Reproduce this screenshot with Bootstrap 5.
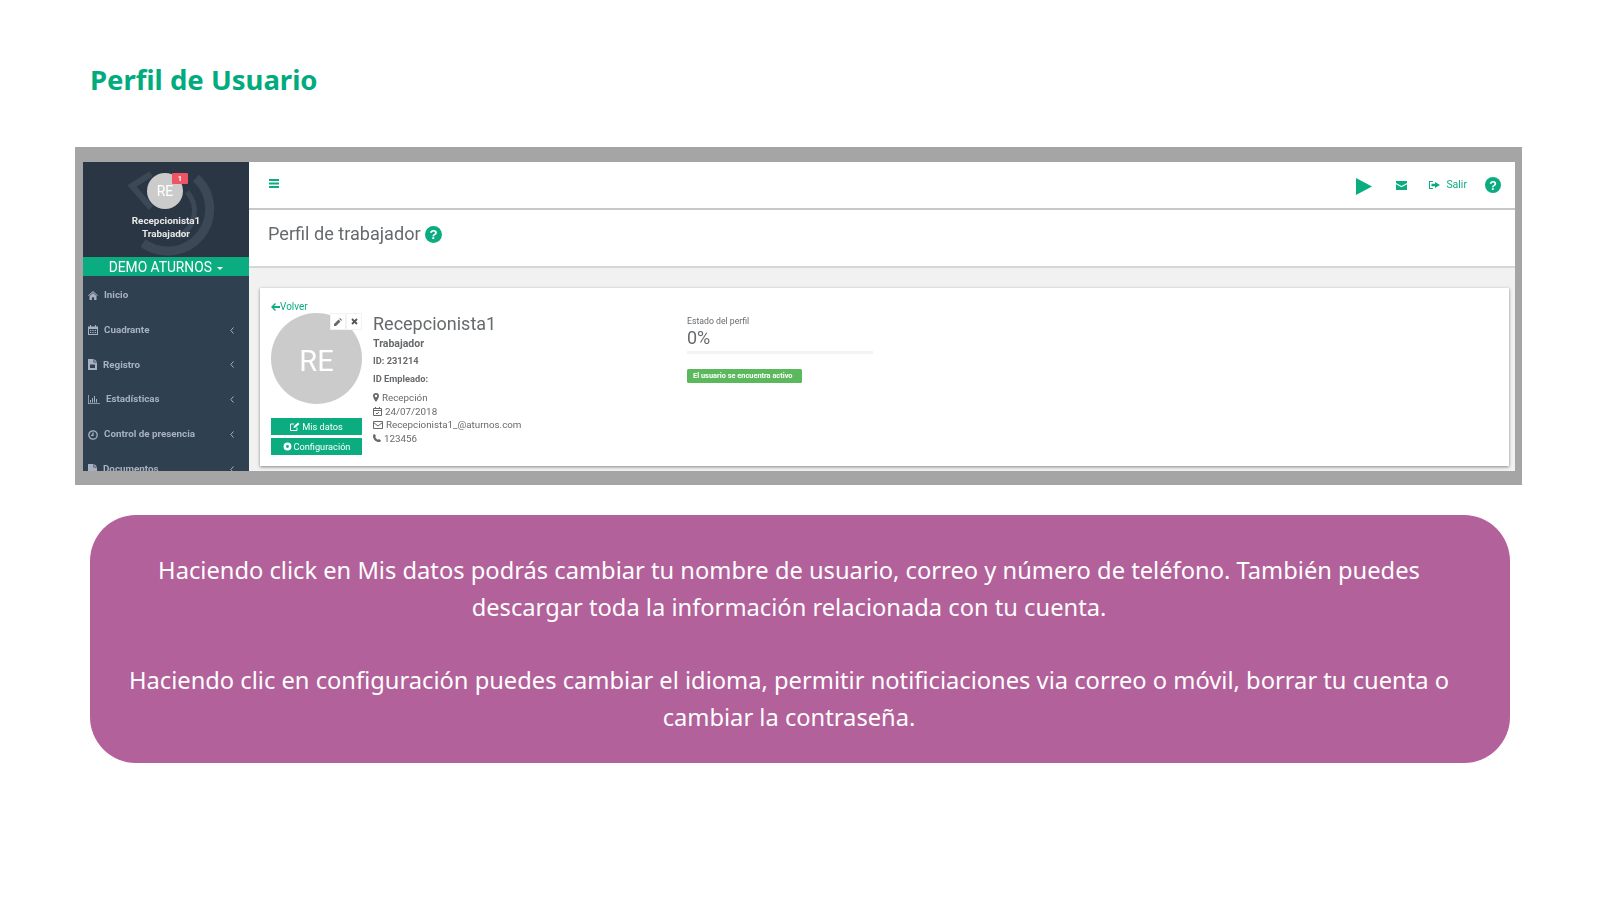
<!DOCTYPE html>
<html lang="es">
<head>
    <meta charset="UTF-8">
    <meta name="viewport" content="width=device-width, initial-scale=1.0">
    <title>Perfil de Usuario</title>
    <link rel="stylesheet" href="https://cdn.jsdelivr.net/npm/bootstrap@5.3.0/dist/css/bootstrap.min.css">
    <style>
        body { background: #fff; font-family: "Noto Sans", sans-serif; }
        .slide { width: 1600px; height: 900px; padding: 56px 78px 0 75px; overflow: hidden; }
        .slide-title { color: #00ab7e; font: 700 27.5px/47px "Noto Sans", sans-serif; margin: 0 0 44px 15px; }

        .shot-frame { background: #a5a5a5; padding: 15px 7px 14px 8px; height: 338px; font-family: Roboto, sans-serif; color: #676a6c; }
        .shot { height: 309px; overflow: hidden; background: #f1f1f1; filter: blur(.45px); }

        .side { width: 166px; flex: none; background: #2f4050; color: #a7b1c2; overflow: hidden; }
        .side-head { height: 95px; background: #2a3644; position: relative; color: #e8e8e8; text-align: center; font-size: 9.9px; font-weight: 700; line-height: 13.4px; padding-top: 11px; overflow: hidden; }
        .side-arcs { position: absolute; left: 0; top: 0; }
        .side-avatar { width: 36px; height: 36px; border-radius: 50%; background: #cbcbcb; margin: 0 auto 5px; font-size: 14px; font-weight: 400; line-height: 36px; position: relative; left: -1px; color: #fff; }
        .side-name { position: relative; }
        .side-badge { position: absolute; left: 25px; top: 0; width: 16px; height: 11px; background: #ed5565; border-radius: 1px; font-size: 7.5px; font-weight: 700; line-height: 11px; }
        .side-company { height: 19px; background: #0bad80; color: #fff; font-size: 13.8px; line-height: 20px; text-align: center; }
        .side-caret { display: inline-block; border: 3px solid transparent; border-top-color: #fff; border-bottom: 0; vertical-align: 2px; margin-left: 2px; }
        .side-item { height: 34.8px; display: flex; align-items: center; gap: 5px; padding: 0 15px 0 5px; font-size: 9.8px; font-weight: 700; }
        .side-first { margin-top: 2px; }
        .side-item .chev { margin-left: auto; }
        .side-label { margin-left: 1px; }

        .main-area { min-width: 0; }
        .top-bar { height: 48px; background: #fff; border-bottom: 2px solid #c8c8c8; color: #0bad80; padding: 0 14px 0 20px; }
        .top-menu { margin-top: -3px; }
        .top-play { margin-right: 24px; margin-top: 2px; }
        .top-mail { margin-right: 22px; }
        .top-exit { font-size: 10.5px; margin-left: 6px; margin-right: 18px; }
        .page-head { height: 58px; background: #fff; border-bottom: 2px solid #d6d6d6; padding: 0 0 8px 19px; font-size: 18.1px; }
        .profile-card { background: #fff; margin: 20px 6px 0 11px; height: 178px; box-shadow: 0 1px 3px rgba(0,0,0,.45); padding: 13px 11px; position: relative; }
        .back-link { color: #0bad80; font-size: 10px; line-height: 12px; display: flex; align-items: center; }
        .avatar-col { width: 91px; flex: none; }
        .avatar-big { width: 91px; height: 91px; border-radius: 50%; background: #cbcbcb; color: #fff; font-size: 29px; line-height: 96px; text-align: center; position: relative; margin-bottom: 14px; }
        .avatar-tools { position: absolute; right: 0; top: 0; display: flex; background: #fff; height: 17px; line-height: 1; }
        .avatar-tools span { width: 16px; display: flex; align-items: center; justify-content: center; border: 1px solid #f2f2f2; }
        .green-btn { display: flex; align-items: center; justify-content: center; gap: 2px; height: 17px; background: #0bad80; color: #fff; font-size: 9.2px; margin-bottom: 3px; }
        .info-col { width: 325px; flex: none; padding-left: 11px; margin-top: -3px; }
        .info-name { font-size: 18px; line-height: 22px; margin-top: 3px; }
        .info-role { font-size: 10.5px; font-weight: 700; line-height: 17.4px; }
        .info-strong { font-size: 9.3px; font-weight: 700; line-height: 17.4px; }
        .info-line { font-size: 9.8px; line-height: 13.5px; display: flex; align-items: center; gap: 3px; }
        .state-col { width: 186px; margin-top: 2px; }
        .state-label { font-size: 8.7px; line-height: 12px; }
        .state-num { font-size: 18px; line-height: 22px; }
        .state-bar { height: 3px; background: #f3f3f3; margin: 2px 0 15px; }
        .state-pill { display: block; background: #5cb85c; color: #fff; font-size: 7.4px; font-weight: 700; line-height: 14px; padding: 0 6px; border-radius: 1.5px; width: 115px; white-space: nowrap; }

        .note-box { background: #b3619a; color: #fff; border-radius: 46px; height: 248px; margin: 30px 12px 0 15px; padding: 37px 52px 0 30px; font-size: 23.7px; line-height: 36.8px; text-align: center; }
        .note-box p { margin: 0 0 36.8px; }
    </style>
</head>
<body>
    <div class="slide">
        <h1 class="slide-title">Perfil de Usuario</h1>

        <!-- captura de la aplicacion -->
        <div class="shot-frame">
            <div class="shot d-flex">
                <div class="side">
                    <div class="side-head">
                        <svg class="side-arcs" width="166" height="95" viewBox="0 0 166 95" fill="none" stroke="#3b4957">
                            <path d="M113 16A42 42 0 0 1 60 81" stroke-width="9"/>
                            <path d="M68 12 49 24 68 46" stroke-width="6"/>
                            <path d="M104 30A28 28 0 0 1 96 74" stroke-width="5"/>
                        </svg>
                        <div class="side-avatar">RE<span class="side-badge">1</span></div>
                        <div class="side-name">Recepcionista1<br>Trabajador</div>
                    </div>
                    <div class="side-company">DEMO ATURNOS <span class="side-caret"></span></div>
                    <div class="side-item side-first">
                        <svg width="10" height="9" viewBox="0 0 10 9" fill="currentColor"><path d="M5 0 0 4.500l.6.600L5 1.300l4.400 3.800.6-.6zM1.500 5v4h2.400V6.200h2.200V9h2.400V5L5 2z"/></svg>
                        <span class="side-label">Inicio</span>
                    </div>
                    <div class="side-item">
                        <svg width="10" height="10" viewBox="0 0 10 10" fill="currentColor"><path fill-rule="evenodd" d="M0 1.500h2V0h1v1.500h4V0h1v1.500h2V10H0zM1 4v5h8V4z"/><path d="M2 5h1.300v1H2zM4.300 5h1.300v1H4.300zM6.700 5H8v1H6.700zM2 7h1.300v1H2zM4.300 7h1.300v1H4.300zM6.700 7H8v1H6.700z"/></svg>
                        <span class="side-label">Cuadrante</span>
                        <svg class="chev" width="4" height="7" viewBox="0 0 4 7" fill="none" stroke="currentColor"><path d="M3.500.5.800 3.500l2.700 3"/></svg>
                    </div>
                    <div class="side-item">
                        <svg width="9" height="11" viewBox="0 0 9 11" fill="currentColor"><path fill-rule="evenodd" d="M0 0h5.500v3.500H9V11H0zM2 5.500v3.500h5V5.500z"/><path d="M6.300 0 9 2.700H6.300z"/></svg>
                        <span class="side-label">Registro</span>
                        <svg class="chev" width="4" height="7" viewBox="0 0 4 7" fill="none" stroke="currentColor"><path d="M3.500.5.800 3.500l2.700 3"/></svg>
                    </div>
                    <div class="side-item">
                        <svg width="12" height="9" viewBox="0 0 12 9" fill="currentColor"><path d="M0 0h.8v8.200H12V9H0zM2 5h1v2.500H2zM4 3h1v4.500H4zM6 1h1v6.500H6zM8 4h1v3.500H8z"/></svg>
                        <span class="side-label">Estadísticas</span>
                        <svg class="chev" width="4" height="7" viewBox="0 0 4 7" fill="none" stroke="currentColor"><path d="M3.500.5.800 3.500l2.700 3"/></svg>
                    </div>
                    <div class="side-item">
                        <svg width="10" height="10" viewBox="0 0 10 10" fill="none" stroke="currentColor" stroke-width="1.300"><circle cx="5" cy="5" r="4.200"/><path d="M5 2.500V5.300H3"/></svg>
                        <span class="side-label">Control de presencia</span>
                        <svg class="chev" width="4" height="7" viewBox="0 0 4 7" fill="none" stroke="currentColor"><path d="M3.500.5.800 3.500l2.700 3"/></svg>
                    </div>
                    <div class="side-item">
                        <svg width="9" height="11" viewBox="0 0 9 11" fill="currentColor"><path d="M0 0h5.500v3.500H9V11H0zM6.300 0 9 2.700H6.300z"/></svg>
                        <span class="side-label">Documentos</span>
                        <svg class="chev" width="4" height="7" viewBox="0 0 4 7" fill="none" stroke="currentColor"><path d="M3.500.5.800 3.500l2.700 3"/></svg>
                    </div>
                </div>

                <div class="main-area flex-grow-1">
                    <div class="top-bar d-flex align-items-center">
                        <svg class="top-menu" width="10" height="9" viewBox="0 0 10 9" fill="currentColor"><path d="M0 0h10v2H0zM0 3.500h10v2H0zM0 7h10v2H0z"/></svg>
                        <div class="ms-auto d-flex align-items-center">
                            <svg class="top-play" width="16" height="17" viewBox="0 0 16 17" fill="currentColor"><path d="M0 0 16 8.500 0 17z"/></svg>
                            <svg class="top-mail" width="11" height="9" viewBox="0 0 11 9" fill="currentColor"><path d="M0 0h11v2L5.500 5 0 2zM0 3.300 5.500 6.300 11 3.300V9H0z"/></svg>
                            <svg width="11" height="8" viewBox="0 0 11 8" fill="currentColor"><path d="M0 0h4v1H1v6h3v1H0zM6 1l5 3-5 3V5.300H2.500V2.700H6z"/></svg>
                            <span class="top-exit">Salir</span>
                            <svg width="16" height="16" viewBox="0 0 16 16"><circle cx="8" cy="8" r="8" fill="#0bad80"/><text x="8" y="12.500" text-anchor="middle" font-family="Liberation Sans, sans-serif" font-weight="700" font-size="12.500" fill="#fff">?</text></svg>
                        </div>
                    </div>
                    <div class="page-head d-flex align-items-center gap-1">
                        Perfil de trabajador
                        <svg width="17" height="17" viewBox="0 0 16 16"><circle cx="8" cy="8" r="8" fill="#0bad80"/><text x="8" y="12.500" text-anchor="middle" font-family="Liberation Sans, sans-serif" font-weight="700" font-size="12.500" fill="#fff">?</text></svg>
                    </div>
                    <div class="profile-card">
                        <div class="back-link">
                            <svg width="9" height="8" viewBox="0 0 9 8" fill="currentColor"><path d="M4 0 0 4l4 4 1-1-2-2h6V3H3l2-2z"/></svg>Volver
                        </div>
                        <div class="d-flex">
                            <div class="avatar-col">
                                <div class="avatar-big">RE
                                    <div class="avatar-tools">
                                        <span><svg width="8" height="8" viewBox="0 0 8 8" fill="#676a6c"><path d="M0 8V6l4.500-4.500 2 2L2 8zM5.200.8 6 0l2 2-.8.8z"/></svg></span>
                                        <span><svg width="7" height="7" viewBox="0 0 7 7" fill="none" stroke="#555" stroke-width="1.800"><path d="M1 1l5 5M6 1 1 6"/></svg></span>
                                    </div>
                                </div>
                                <div class="green-btn">
                                    <svg width="10" height="9" viewBox="0 0 10 9" fill="none" stroke="#fff"><path d="M7 5.500V8.500H.5V2H4"/><path d="M3.500 6 4 4 8 .5 9.500 2 5.500 5.500z" fill="#fff" stroke="none"/></svg>
                                    Mis datos
                                </div>
                                <div class="green-btn">
                                    <svg width="9" height="9" viewBox="0 0 9 9" fill="none" stroke="#fff" stroke-width="2.500"><circle cx="4.500" cy="4.500" r="2.700"/></svg>
                                    Configuración
                                </div>
                            </div>
                            <div class="info-col">
                                <div class="info-name">Recepcionista1</div>
                                <div class="info-role">Trabajador</div>
                                <div class="info-strong">ID: 231214</div>
                                <div class="info-strong mb-1">ID Empleado:</div>
                                <div class="info-line"><svg width="6" height="9" viewBox="0 0 6 9"><path d="M3 0a3 3 0 0 1 3 3C6 5 3 9 3 9S0 5 0 3a3 3 0 0 1 3-3zm0 1.800a1.200 1.200 0 1 0 0 2.400 1.200 1.200 0 0 0 0-2.400z" fill="#676a6c" fill-rule="evenodd"/></svg>Recepción</div>
                                <div class="info-line"><svg width="9" height="9" viewBox="0 0 9 9" fill="none" stroke="#676a6c"><path d="M.5 1.500h8v7h-8zM.5 3.500h8M2.500 0v2M6.500 0v2M3 6l1 1 2-2"/></svg>24/07/2018</div>
                                <div class="info-line"><svg width="10" height="8" viewBox="0 0 10 8" fill="none" stroke="#676a6c"><path d="M.5.500h9v7h-9zM.5 1.500 5 5l4.500-3.500"/></svg>Recepcionista1_@aturnos.com</div>
                                <div class="info-line"><svg width="8" height="8" viewBox="0 0 8 8" fill="#676a6c"><path d="M1.500 0 3 2 2.200 3.100C2.700 4.300 3.700 5.300 4.900 5.800L6 5l2 1.500C7.700 7.600 6.800 8 6 8 2.700 8 0 5.300 0 2 0 1.200.5.300 1.500 0z"/></svg>123456</div>
                            </div>
                            <div class="state-col">
                                <div class="state-label">Estado del perfil</div>
                                <div class="state-num">0%</div>
                                <div class="state-bar"></div>
                                <span class="state-pill">El usuario se encuentra activo</span>
                            </div>
                        </div>
                    </div>
                </div>
            </div>
        </div>

        <div class="note-box">
            <p>Haciendo click en Mis datos podrás cambiar tu nombre de usuario, correo y número de teléfono. También puedes descargar toda la información relacionada con tu cuenta.</p>
            <p>Haciendo clic en configuración puedes cambiar el idioma, permitir notificiaciones via correo o móvil, borrar tu cuenta o cambiar la contraseña.</p>
        </div>
    </div>

    <script src="https://cdn.jsdelivr.net/npm/bootstrap@5.3.0/dist/js/bootstrap.bundle.min.js"></script>
</body>
</html>
